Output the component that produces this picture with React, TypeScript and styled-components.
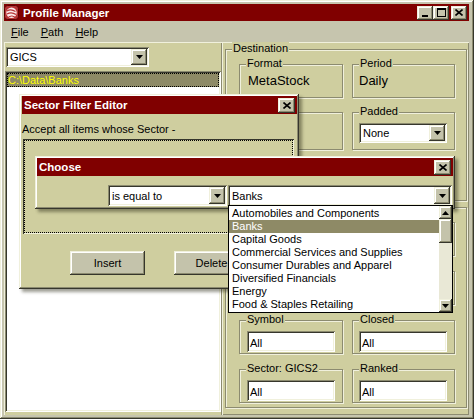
import React from "react";
import styled, { createGlobalStyle, css } from "styled-components";

const C = {
  face: "#CFCE9F",
  frame: "#C6C5AE",
  btn: "#C4C3AB",
  light: "#F0F0DC",
  white: "#FFFFFF",
  shadow: "#8C8B70",
  dark: "#36362C",
  title: "#800000",
  sel: "#8E8A66",
  track: "#E9E8D6",
};

const GlobalStyle = createGlobalStyle`
  html, body { margin: 0; padding: 0; background: ${C.frame}; }
  body { font-family: "Liberation Sans", Arial, sans-serif; font-size: 11px; color: #000; }
  *, *::before, *::after { box-sizing: border-box; }
`;

const raised = css`
  box-shadow: inset -1px -1px 0 ${C.dark}, inset 1px 1px 0 ${C.light},
    inset -2px -2px 0 ${C.shadow}, inset 2px 2px 0 ${C.white};
`;

const sunken = css`
  box-shadow: inset 1px 1px 0 ${C.shadow}, inset -1px -1px 0 ${C.white},
    inset 2px 2px 0 ${C.dark}, inset -2px -2px 0 ${C.light};
`;

const Window = styled.div`
  position: relative;
  width: 474px;
  height: 419px;
  padding: 4px 5px 4px 4px;
  background: ${C.frame};
  display: flex;
  flex-direction: column;
  overflow: hidden;
  ${raised}
`;

const TitleBar = styled.div<{ $h: number }>`
  height: ${(p) => p.$h}px;
  flex-shrink: 0;
  background: ${C.title};
  display: flex;
  align-items: center;
  color: #fff;
  font-weight: bold;
  font-size: 11.5px;
  padding-right: 2px;
`;

const TitleText = styled.span<{ $ml: number }>`
  margin-left: ${(p) => p.$ml}px;
  flex: 1;
  white-space: nowrap;
`;

const CaptionButton = styled.div<{ $w?: number; $h?: number; $ml?: number }>`
  width: ${(p) => p.$w ?? 16}px;
  height: ${(p) => p.$h ?? 14}px;
  margin-left: ${(p) => p.$ml ?? 0}px;
  background: ${C.btn};
  display: flex;
  align-items: center;
  justify-content: center;
  ${raised}
`;

const MenuBar = styled.div`
  height: 21px;
  flex-shrink: 0;
  display: flex;
  align-items: center;
  padding-left: 1px;
`;

const MenuItem = styled.span`
  padding: 0 6px;
  font-size: 11px;
`;

const Main = styled.div`
  flex: 1;
  min-height: 0;
  display: flex;
  background: ${C.face};
`;

const LeftPanel = styled.div`
  width: 218px;
  flex-shrink: 0;
  padding: 5px 2px 3px 1px;
  display: flex;
  flex-direction: column;
  gap: 4px;
  box-shadow: inset 1px 1px 0 ${C.light}, inset -1px 0 0 ${C.shadow};
`;

const RightPanel = styled.div`
  flex: 1;
  padding: 7px 2px 8px 3px;
  display: flex;
  flex-direction: column;
  box-shadow: inset 1px 1px 0 ${C.light}, inset -1px -1px 0 ${C.shadow};
`;

const Combo = styled.div<{ $w: number; $h: number; $ml?: number; $mt?: number }>`
  width: ${(p) => p.$w}px;
  height: ${(p) => p.$h}px;
  margin-left: ${(p) => p.$ml ?? 0}px;
  margin-top: ${(p) => p.$mt ?? 0}px;
  flex-shrink: 0;
  background: #fff;
  padding: 2px;
  display: flex;
  align-items: stretch;
  ${sunken}
`;

const ComboText = styled.span`
  flex: 1;
  display: flex;
  align-items: center;
  padding-left: 2px;
  font-size: 11px;
  white-space: nowrap;
  overflow: hidden;
`;

const ComboButton = styled.div`
  width: 16px;
  background: ${C.btn};
  display: flex;
  align-items: center;
  justify-content: center;
  ${raised}
`;

const ListBox = styled.div`
  flex: 1;
  background: #fff;
  padding: 2px;
  margin-right: -1px;
  ${sunken}
`;

const TreeRow = styled.div`
  height: 14px;
  line-height: 14px;
  padding-left: 1px;
  background: ${C.sel};
  color: #ffff00;
  outline: 1px dotted #000;
  outline-offset: -1px;
  font-size: 11px;
`;

const Group = styled.div<{ $h: number; $mt?: number }>`
  position: relative;
  height: ${(p) => p.$h}px;
  margin-top: ${(p) => p.$mt ?? 0}px;
  flex-shrink: 0;
  border: 1px solid ${C.shadow};
  box-shadow: inset 1px 1px 0 ${C.light}, 1px 1px 0 ${C.light};
`;

const Caption = styled.span`
  position: absolute;
  top: -8px;
  left: 6px;
  padding: 0 1px;
  background: ${C.face};
  line-height: 13px;
  font-size: 11px;
  white-space: nowrap;
`;

const GroupGrid = styled.div<{ $pt: number; $gap: number; $rows: string }>`
  display: grid;
  grid-template-columns: 104px 103px;
  grid-template-rows: ${(p) => p.$rows};
  column-gap: 9px;
  row-gap: ${(p) => p.$gap}px;
  padding: ${(p) => p.$pt}px 0 0 13px;
`;

const Cell = styled.div<{ $pt?: number; $pl?: number }>`
  position: relative;
  border: 1px solid ${C.shadow};
  box-shadow: inset 1px 1px 0 ${C.light}, 1px 1px 0 ${C.light};
  padding: ${(p) => p.$pt ?? 0}px 0 0 ${(p) => p.$pl ?? 0}px;
`;

const Value = styled.div`
  font-size: 13px;
  line-height: 15px;
  white-space: nowrap;
`;

const Field = styled.div`
  width: 88px;
  height: 21px;
  background: #fff;
  padding: 2px 0 0 3px;
  display: flex;
  align-items: center;
  font-size: 11px;
  ${sunken}
`;

const Dialog = styled.div<{ $x: number; $y: number; $w: number; $h: number; $pl: number }>`
  position: absolute;
  left: ${(p) => p.$x}px;
  top: ${(p) => p.$y}px;
  width: ${(p) => p.$w}px;
  height: ${(p) => p.$h}px;
  padding: 2px 2px 2px ${(p) => p.$pl}px;
  background: ${C.face};
  display: flex;
  flex-direction: column;
  box-shadow: inset -1px -1px 0 ${C.dark}, inset 1px 1px 0 ${C.light},
    inset -2px -2px 0 ${C.shadow}, inset 2px 2px 0 ${C.white},
    3px 3px 3px rgba(40, 40, 20, 0.45);
`;

const SectorBody = styled.div`
  padding-top: 8px;
  display: flex;
  flex-direction: column;
`;

const Prompt = styled.div`
  line-height: 14px;
  font-size: 11px;
  white-space: nowrap;
`;

const FilterList = styled.div`
  height: 95px;
  margin: 3px 3px 0 1px;
  background: ${C.face};
  box-shadow: inset 1px 1px 0 ${C.dark}, inset -1px -1px 0 ${C.light};
  outline: 1px dotted #000;
  outline-offset: -2px;
`;

const ButtonRow = styled.div`
  display: flex;
  gap: 29px;
  margin: 17px 0 0 48px;
`;

const PushButton = styled.div`
  width: 75px;
  height: 24px;
  background: ${C.btn};
  display: flex;
  align-items: center;
  justify-content: center;
  font-size: 11px;
  ${raised}
`;

const ChooseBody = styled.div`
  display: flex;
  gap: 1px;
  padding: 9px 0 0 71px;
`;

const DropList = styled.div`
  position: absolute;
  left: 228px;
  top: 205px;
  width: 225px;
  height: 108px;
  border: 1px solid #000;
  background: #fff;
  display: flex;
`;

const Items = styled.div`
  flex: 1;
  padding-top: 1px;
`;

const Item = styled.div<{ $sel?: boolean }>`
  height: 13px;
  line-height: 13px;
  padding-left: 3px;
  font-size: 11px;
  white-space: nowrap;
  background: ${(p) => (p.$sel ? C.sel : "transparent")};
  color: ${(p) => (p.$sel ? "#fff" : "#000")};
`;

const ScrollBar = styled.div`
  width: 13px;
  display: flex;
  flex-direction: column;
  background: ${C.track};
`;

const ScrollButton = styled.div<{ $h: number }>`
  height: ${(p) => p.$h}px;
  flex-shrink: 0;
  background: ${C.btn};
  display: flex;
  align-items: center;
  justify-content: center;
  ${raised}
`;

const ScrollTrack = styled.div`
  flex: 1;
`;

const Down = () => (
  <svg width="7" height="4" viewBox="0 0 7 4">
    <polygon points="0,0 7,0 3.5,4" fill="#000" />
  </svg>
);
const Up = () => (
  <svg width="7" height="4" viewBox="0 0 7 4">
    <polygon points="0,4 7,4 3.5,0" fill="#000" />
  </svg>
);
const CloseGlyph = () => (
  <svg width="8" height="7" viewBox="0 0 8 7">
    <path d="M0.5 0.5 L7.5 6.5 M7.5 0.5 L0.5 6.5" stroke="#000" strokeWidth="1.6" />
  </svg>
);
const MinGlyph = () => (
  <svg width="8" height="8" viewBox="0 0 8 8">
    <rect x="1" y="6" width="6" height="2" fill="#000" />
  </svg>
);
const MaxGlyph = () => (
  <svg width="9" height="9" viewBox="0 0 9 9">
    <rect x="0.5" y="0.5" width="8" height="8" fill="none" stroke="#000" />
    <rect x="0" y="0" width="9" height="2" fill="#000" />
  </svg>
);
const AppIcon = () => (
  <svg width="15" height="15" viewBox="0 0 15 15">
    <rect x="0.5" y="0.5" width="14" height="14" rx="3" fill="#B53434" stroke="#5a0000" />
    <circle cx="7.5" cy="7.8" r="5.2" fill="#FBEAEA" />
    <path d="M3 6 Q7 3.5 11.5 6.5" stroke="#B53434" strokeWidth="1.3" fill="none" />
    <path d="M3 9 Q7.5 6.5 12 9.5" stroke="#B53434" strokeWidth="1.3" fill="none" />
    <path d="M4.5 11.8 Q8 10 11 12" stroke="#B53434" strokeWidth="1" fill="none" />
  </svg>
);

const ComboBox = ({ text, w, h, ml, mt }: { text: string; w: number; h: number; ml?: number; mt?: number }) => (
  <Combo $w={w} $h={h} $ml={ml} $mt={mt}>
    <ComboText>{text}</ComboText>
    <ComboButton>
      <Down />
    </ComboButton>
  </Combo>
);

const sectors = [
  "Automobiles and Components",
  "Banks",
  "Capital Goods",
  "Commercial Services and Supplies",
  "Consumer Durables and Apparel",
  "Diversified Financials",
  "Energy",
  "Food & Staples Retailing",
];

export default function App() {
  return (
    <>
      <GlobalStyle />
      <Window>
        <TitleBar $h={17}>
          <AppIcon />
          <TitleText $ml={4}>Profile Manager</TitleText>
          <CaptionButton>
            <MinGlyph />
          </CaptionButton>
          <CaptionButton>
            <MaxGlyph />
          </CaptionButton>
          <CaptionButton $ml={2}>
            <CloseGlyph />
          </CaptionButton>
        </TitleBar>
        <MenuBar>
          <MenuItem>
            <u>F</u>ile
          </MenuItem>
          <MenuItem>
            <u>P</u>ath
          </MenuItem>
          <MenuItem>
            <u>H</u>elp
          </MenuItem>
        </MenuBar>
        <Main>
          <LeftPanel>
            <ComboBox text="GICS" w={143} h={20} ml={1} />
            <ListBox>
              <TreeRow>C:\Data\Banks</TreeRow>
            </ListBox>
          </LeftPanel>
          <RightPanel>
            <Group $h={152}>
              <Caption>Destination</Caption>
              <GroupGrid $pt={14} $gap={14} $rows="34px 38px">
                <Cell $pt={8} $pl={8}>
                  <Caption>Format</Caption>
                  <Value>MetaStock</Value>
                </Cell>
                <Cell $pt={8} $pl={6}>
                  <Caption>Period</Caption>
                  <Value>Daily</Value>
                </Cell>
                <Cell />
                <Cell $pt={10} $pl={6}>
                  <Caption>Padded</Caption>
                  <ComboBox text="None" w={88} h={20} />
                </Cell>
              </GroupGrid>
            </Group>
            <Group $h={201} $mt={6}>
              <GroupGrid $pt={14} $gap={15} $rows="34px 34px 34px 34px">
                <Cell />
                <Cell />
                <Cell />
                <Cell />
                <Cell $pt={10} $pl={7}>
                  <Caption>Symbol</Caption>
                  <Field>All</Field>
                </Cell>
                <Cell $pt={10} $pl={6}>
                  <Caption>Closed</Caption>
                  <Field>All</Field>
                </Cell>
                <Cell $pt={10} $pl={7}>
                  <Caption>Sector: GICS2</Caption>
                  <Field>All</Field>
                </Cell>
                <Cell $pt={10} $pl={6}>
                  <Caption>Ranked</Caption>
                  <Field>All</Field>
                </Cell>
              </GroupGrid>
            </Group>
          </RightPanel>
        </Main>

        <Dialog $x={19} $y={94} $w={280} $h={195} $pl={3}>
          <TitleBar $h={18}>
            <TitleText $ml={2}>Sector Filter Editor</TitleText>
            <CaptionButton $w={17} $h={15}>
              <CloseGlyph />
            </CaptionButton>
          </TitleBar>
          <SectorBody>
            <Prompt>Accept all items whose Sector -</Prompt>
            <FilterList />
            <ButtonRow>
              <PushButton>Insert</PushButton>
              <PushButton>Delete</PushButton>
            </ButtonRow>
          </SectorBody>
        </Dialog>

        <Dialog $x={35} $y={156} $w={420} $h={53} $pl={2}>
          <TitleBar $h={18}>
            <TitleText $ml={2}>Choose</TitleText>
            <CaptionButton $w={17} $h={15}>
              <CloseGlyph />
            </CaptionButton>
          </TitleBar>
          <ChooseBody>
            <ComboBox text="is equal to" w={119} h={21} />
            <ComboBox text="Banks" w={224} h={21} />
          </ChooseBody>
        </Dialog>

        <DropList>
          <Items>
            {sectors.map((s) => (
              <Item key={s} $sel={s === "Banks"}>
                {s}
              </Item>
            ))}
          </Items>
          <ScrollBar>
            <ScrollButton $h={13}>
              <Up />
            </ScrollButton>
            <ScrollButton $h={24} />
            <ScrollTrack />
            <ScrollButton $h={13}>
              <Down />
            </ScrollButton>
          </ScrollBar>
        </DropList>
      </Window>
    </>
  );
}
